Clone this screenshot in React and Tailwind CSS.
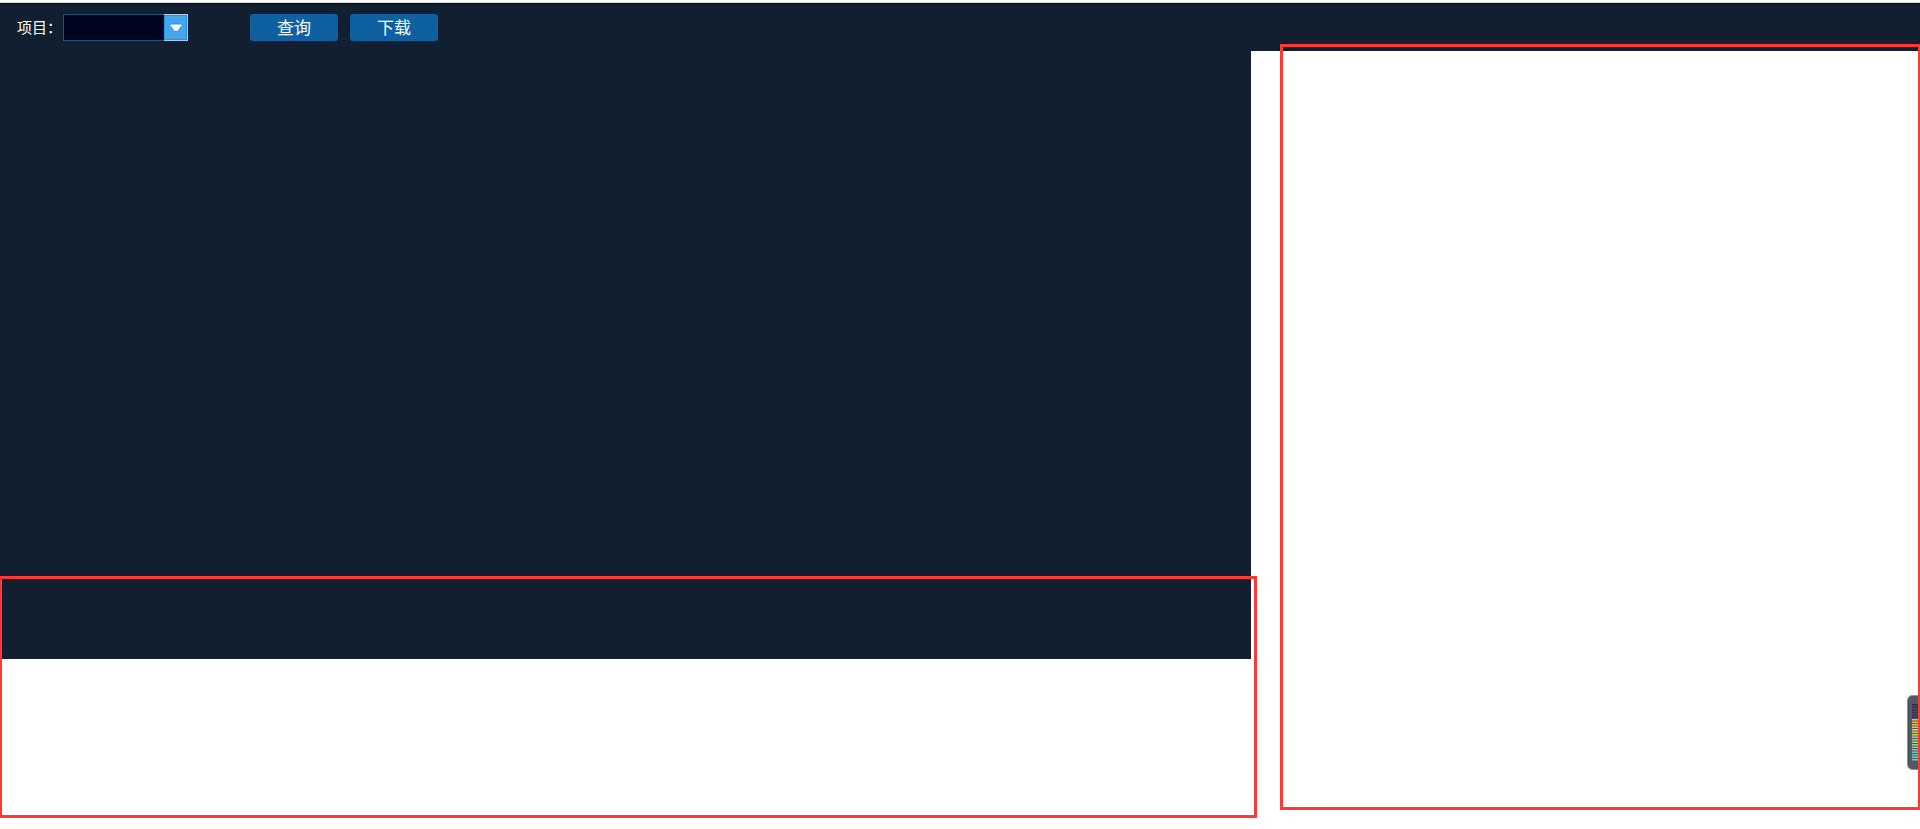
import React, { useState } from 'react';

const meterBars = [
    '#2f3340', '#2f3340', '#2f3340', '#2f3340', '#2f3340', '#2f3340',
    '#e5b064', '#e8b64c', '#ecc63e', '#dccb50', '#dcdc5a', '#c6d65c', '#bcd965', '#b0d86c',
    '#a2d873', '#97d87c', '#8fd98a', '#84d596', '#84c99c', '#6fcfa6', '#5ad0b0', '#56dcc4', '#52e2c8'
];

// Small volume-like widget docked to the right edge
const Meter = () => (
    <svg className="absolute right-0 top-[644px] h-[75px] w-[13px]" viewBox="0 0 13 75" aria-hidden="true">
        <rect x="0.5" y="0.5" width="20" height="74" rx="5" fill="#525866" stroke="#8d929d" />
        <path d="M1.5 6v63" stroke="#444a57" />
        {meterBars.map((color, i) => (
            <rect key={i} x="5" y={9 + i * 2.5} width="8" height="1.5" fill={color} />
        ))}
    </svg>
);

const ProjectSelect = ({ value, onChange }) => (
    <div className="relative h-[27px] w-[125px]">
        <select
            id="project"
            value={value}
            onChange={onChange}
            className="h-full w-full appearance-none border border-[#1b5675] bg-[#000420] pl-2 pr-7 text-sm text-white outline-none"
        >
            <option value=""></option>
        </select>
        <span className="pointer-events-none absolute inset-y-0 right-0 flex w-6 border-y border-r border-[#a9cde8]">
            <span className="flex flex-1 items-center justify-center border border-[#109af0] bg-[#48a6e8]">
                <svg className="h-[10px] w-[14px] shrink-0" viewBox="0 0 14 10" aria-hidden="true">
                    <path d="M1 1h12v1.5L8.500 8.500h-3L1 2.500z" fill="#fff" stroke="#159cf0" strokeWidth="1" strokeLinejoin="round" />
                </svg>
            </span>
        </span>
    </div>
);

const ToolbarButton = ({ children }) => (
    <button
        type="button"
        className="flex h-[27px] w-[88px] items-start justify-center rounded-[3px] bg-[#0e60a0] text-[17px] leading-[25px] text-white hover:bg-[#1470b8]"
    >
        {children}
    </button>
);

const App = () => {
    const [project, setProject] = useState('');

    return (
        <div className="min-h-screen overflow-hidden bg-white font-['Noto_Sans_CJK_SC',sans-serif]">
            {/* Toolbar */}
            <header className="mt-[2px] flex h-[49px] items-start border-t border-[#dcdcdc] bg-[#121f30] pl-[17px] pt-[11px] shadow-[inset_0_1px_0_#030c1c]">
                <label htmlFor="project" className="w-[46px] whitespace-nowrap text-[15px] leading-[25px] text-white">
                    项目：
                </label>
                <ProjectSelect value={project} onChange={(e) => setProject(e.target.value)} />
                <div className="ml-[62px] flex gap-3">
                    <ToolbarButton>查询</ToolbarButton>
                    <ToolbarButton>下载</ToolbarButton>
                </div>
            </header>

            <main className="grid grid-cols-[1251fr_669fr]">
                <section className="relative">
                    <div className="h-[608px] bg-[#121f30]"></div>
                    <div className="absolute -left-px -right-[6px] top-[525px] h-[242px] border-[3px] border-[#ff3838]"></div>
                </section>
                <section className="relative">
                    <Meter />
                    <div className="absolute -right-px -top-[7px] left-[29px] h-[766px] border-[3px] border-[#ff3838]"></div>
                </section>
            </main>
        </div>
    );
};

export default App;
